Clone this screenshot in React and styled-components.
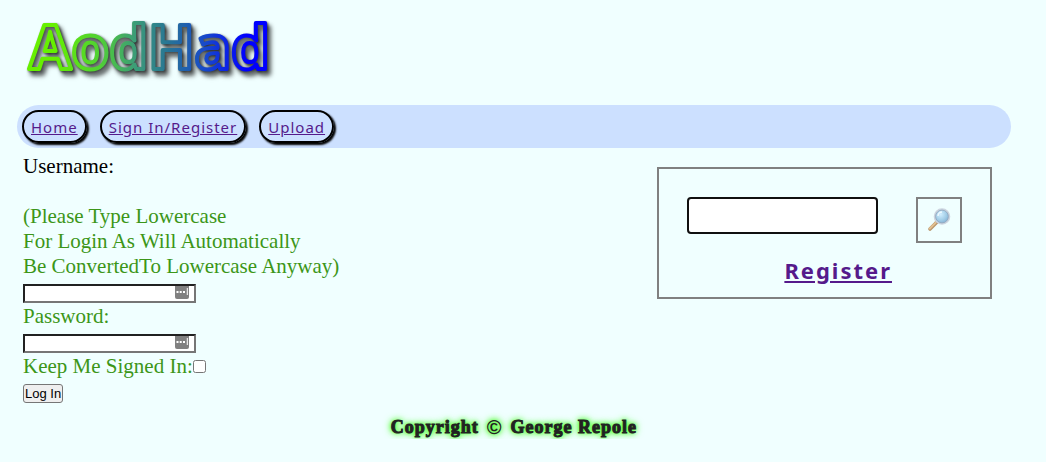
import React from "react";
import styled, { createGlobalStyle } from "styled-components";

const GlobalStyle = createGlobalStyle`
  *, *::before, *::after { box-sizing: border-box; }
  body {
    margin: 0;
    background: #f0ffff;
    color: #000;
    font-family: "Liberation Serif", "Times New Roman", serif;
  }
`;

const Page = styled.div`
  width: 95%;
  margin-left: 17px;
`;

const Header = styled.header`
  height: 105px;
  padding-top: 8px;
`;

const Logo = styled.svg`
  display: block;
  overflow: visible;
  filter: drop-shadow(1px 1px 1px rgba(0, 0, 0, 0.6)) drop-shadow(3px 4px 2px rgba(0, 0, 0, 0.7));

  text {
    font-family: "Noto Sans", sans-serif;
    font-size: 61px;
    font-weight: 700;
    fill: none;
    stroke: url(#logo-fade);
    stroke-width: 4px;
    stroke-linejoin: round;
  }
`;

const Nav = styled.nav`
  display: flex;
  gap: 13px;
  padding: 5px;
  border-radius: 22px;
  background: #cce0ff;
`;

const NavLink = styled.a`
  height: 33px;
  padding: 0 7px;
  border: 2px solid #000;
  border-radius: 17px;
  box-shadow: 2px 2px 2px #000;
  color: #551a8b;
  font-family: "Noto Sans", sans-serif;
  font-size: 15px;
  line-height: 30px;
  letter-spacing: 1px;
`;

const Main = styled.main`
  display: flex;
  justify-content: space-between;
  align-items: flex-start;
  padding: 6px 19px 0 6px;
`;

const LoginForm = styled.form`
  display: flex;
  flex-direction: column;
  align-items: flex-start;
  color: #3c9618;
  font-size: 21px;
  line-height: 25px;
`;

const FieldLabel = styled.label`
  color: ${(p) => (p.$dark ? "#000" : "inherit")};
`;

const Hint = styled.p`
  margin: 25px 0 0;
`;

const Field = styled.div`
  position: relative;
  padding: 5px 0 1px;
  height: 25px;
  line-height: 0;
`;

const TextInput = styled.input`
  width: 173px;
  height: 19px;
  padding: 1px 20px 1px 2px;
  border: 2px solid;
  border-color: #212121 #767676 #767676 #212121;
  background: #fff;
  font: 13px "Liberation Sans", Arial, sans-serif;
`;

const FieldIcon = styled.svg`
  position: absolute;
  top: 7px;
  right: 7px;
`;

const CheckRow = styled.div`
  display: flex;
  align-items: center;
`;

const Checkbox = styled.input`
  width: 13px;
  height: 13px;
  margin: 0;
`;

const LoginButton = styled.button`
  height: 19px;
  margin-top: 5px;
  padding: 0 1px;
  border: 1px solid #767676;
  border-radius: 3px;
  background: #efefef;
  color: #000;
  font: 13px "Liberation Sans", Arial, sans-serif;
`;

const SearchPanel = styled.section`
  margin-top: 13px;
  padding: 28px 28px 12px;
  border: 2px solid #808080;
`;

const SearchForm = styled.form`
  display: flex;
  align-items: flex-start;
  gap: 38px;
`;

const SearchInput = styled.input`
  width: 191px;
  height: 37px;
  padding: 0 8px;
  border: 2px solid #101010;
  border-radius: 4px;
  background: #fff;
  font: 16px "Liberation Sans", Arial, sans-serif;
`;

const SearchButton = styled.button`
  display: grid;
  place-items: center;
  width: 46px;
  height: 46px;
  padding: 0;
  border: 2px solid #808080;
  background: transparent;
`;

const RegisterLine = styled.p`
  margin: 12px 0 0;
  padding-left: 28px;
  text-align: center;
`;

const RegisterLink = styled.a`
  color: #551a8b;
  font-family: "Noto Sans", sans-serif;
  font-size: 22px;
  font-weight: 700;
  line-height: 30px;
  letter-spacing: 2px;
`;

const Footer = styled.footer`
  display: flex;
  justify-content: center;
  gap: 8px;
  margin-top: 12px;
  color: #222;
  font-size: 18px;
  font-weight: 700;
  line-height: 24px;
  letter-spacing: 1px;
  text-shadow: 0 0 4px #4f2, 0 0 6px #4f2, 0 0 8px #6f4;
  -webkit-text-stroke: 1px #222;
`;

const Mark = styled.span`
  font-family: "Liberation Sans", Arial, sans-serif;
  font-size: 20px;
  -webkit-text-stroke: 0;
`;

function ManagerIcon() {
  return (
    <FieldIcon width="14" height="13" viewBox="0 0 14 13" aria-hidden="true">
      <path d="M0 0h14v11a2 2 0 0 1-2 2H2a2 2 0 0 1-2-2z" fill="#808080" />
      <path d="M1.5 5h2v2h-2zM4.700 5h2v2h-2zM8 5h2v2H8zM11.800 2h1v7h-1z" fill="#fff" />
    </FieldIcon>
  );
}

function Magnifier() {
  return (
    <svg width="24" height="24" viewBox="0 0 24 24" aria-hidden="true">
      <defs>
        <radialGradient id="lens" cx="0.4" cy="0.35" r="0.7">
          <stop offset="0" stopColor="#d2efff" />
          <stop offset="0.6" stopColor="#9fcbe6" />
          <stop offset="1" stopColor="#7da9cf" />
        </radialGradient>
      </defs>
      <path d="M9.5 14.5 3 21" stroke="#b8966c" strokeWidth="3.600" strokeLinecap="round" />
      <path d="M9 14.3 2.800 20.500" stroke="#e3c191" strokeWidth="1.800" strokeLinecap="round" />
      <path d="m11 13-1.500 1.500" stroke="#8b8f99" strokeWidth="2" />
      <circle cx="15" cy="8.500" r="7.300" fill="url(#lens)" stroke="#ccd4df" strokeWidth="2" />
      <circle cx="15" cy="8.500" r="6.400" fill="none" stroke="#8ba3bb" strokeWidth="0.800" />
      <path d="M11 8a4 4 0 0 1 4-4" stroke="#f0faff" strokeWidth="1.400" fill="none" />
    </svg>
  );
}

export default function App() {
  return (
    <>
      <GlobalStyle />
      <Page>
        <Header>
          <Logo width="260" height="80" role="img" aria-label="AodHad">
            <defs>
              <linearGradient id="logo-fade" gradientUnits="userSpaceOnUse" x1="12" y1="0" x2="248" y2="0">
                <stop offset="0.1" stopColor="#66f000" />
                <stop offset="0.3" stopColor="#50d035" />
                <stop offset="0.45" stopColor="#3c9c78" />
                <stop offset="0.6" stopColor="#267298" />
                <stop offset="0.75" stopColor="#1748cc" />
                <stop offset="0.92" stopColor="#0000ff" />
              </linearGradient>
            </defs>
            <text x="12" y="61">AodHad</text>
          </Logo>
        </Header>
        <Nav>
          <NavLink href="#home">Home</NavLink>
          <NavLink href="#sign-in">Sign In/Register</NavLink>
          <NavLink href="#upload">Upload</NavLink>
        </Nav>
        <Main>
          <LoginForm>
            <FieldLabel $dark htmlFor="username">Username:</FieldLabel>
            <Hint id="username-hint">
              (Please Type Lowercase
              <br />
              For Login As Will Automatically
              <br />
              Be ConvertedTo Lowercase Anyway)
            </Hint>
            <Field>
              <TextInput id="username" type="text" aria-describedby="username-hint" />
              <ManagerIcon />
            </Field>
            <FieldLabel htmlFor="password">Password:</FieldLabel>
            <Field>
              <TextInput id="password" type="password" />
              <ManagerIcon />
            </Field>
            <CheckRow>
              <FieldLabel htmlFor="keep">Keep Me Signed In:</FieldLabel>
              <Checkbox id="keep" type="checkbox" />
            </CheckRow>
            <LoginButton type="button">Log In</LoginButton>
          </LoginForm>
          <SearchPanel>
            <SearchForm>
              <SearchInput type="search" aria-label="Search" />
              <SearchButton type="button" aria-label="Search">
                <Magnifier />
              </SearchButton>
            </SearchForm>
            <RegisterLine>
              <RegisterLink href="#register">Register</RegisterLink>
            </RegisterLine>
          </SearchPanel>
        </Main>
        <Footer>
          <span>Copyright</span>
          <Mark>©</Mark>
          <span>George Repole</span>
        </Footer>
      </Page>
    </>
  );
}
